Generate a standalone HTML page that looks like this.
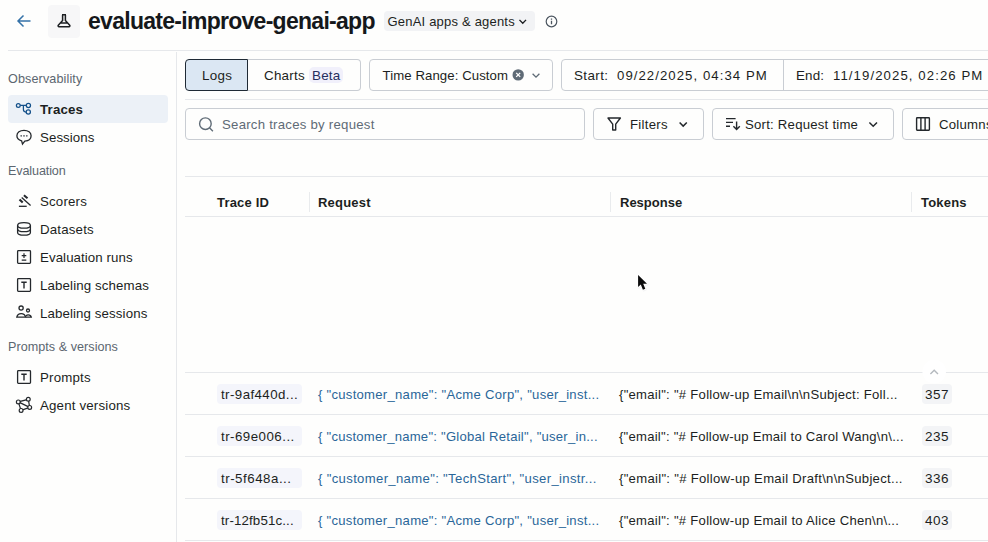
<!DOCTYPE html>
<html>
<head>
<meta charset="utf-8">
<style>
*{box-sizing:border-box;margin:0;padding:0}
html,body{width:988px;height:542px;overflow:hidden;background:#fefefd;}
body{font-family:"Liberation Sans",sans-serif;color:#1c1f22;position:relative;font-size:13px;}
.abs{position:absolute;white-space:nowrap;}
.hline{position:absolute;height:1px;background:#e6e8eb;}
.vline{position:absolute;width:1px;background:#e6e8eb;}
.btn{position:absolute;border:1px solid #c9cdd3;border-radius:4px;background:#fefefd;height:32px;}
.side{position:absolute;left:40px;font-size:13.3px;letter-spacing:0.17px;color:#1c1f22;white-space:nowrap;}
.sec{position:absolute;left:8px;font-size:12.6px;letter-spacing:0.04px;margin-top:1px;color:#5c6670;white-space:nowrap;}
.th{position:absolute;top:195px;font-weight:bold;font-size:13px;letter-spacing:0.2px;color:#1c1f22;white-space:nowrap;}
.tag{position:absolute;left:217px;width:85px;height:20px;border-radius:4px;background:#f4f5fb;font-size:13.3px;letter-spacing:0.52px;line-height:22px;padding-left:4px;margin-top:1px;white-space:nowrap;}
.req{position:absolute;left:318px;font-size:13.1px;letter-spacing:0.27px;color:#2a6699;white-space:nowrap;}
.resp{position:absolute;left:619px;font-size:13.1px;letter-spacing:0.27px;color:#1c1f22;white-space:nowrap;}
.tok{position:absolute;left:921.500px;width:30px;height:20px;border-radius:4px;background:#f3f4f6;font-size:13.5px;letter-spacing:0.5px;line-height:22px;text-align:center;margin-top:1px;padding-left:1px}
svg{position:absolute;overflow:visible}
</style>
</head>
<body>
<!-- header -->
<svg style="left:16px;top:13px" width="16" height="16" viewBox="0 0 16 16"><path d="M14.5 8H2.2M7.5 2.5L2 8l5.5 5.500" fill="none" stroke="#3572a8" stroke-width="1.5"/></svg>
<div class="abs" style="left:48px;top:5px;width:32px;height:33px;border-radius:4px;background:#f7f7f8"></div>
<svg style="left:56px;top:12.600px" width="16" height="16" viewBox="0 0 16 16"><path d="M6 1.800h4M6.600 2v5.500L2.300 12.200c-.5.600-.1 1.500.7 1.500h10c.8 0 1.200-.9.700-1.500L9.400 7.500V2M4.500 10h7" fill="none" stroke="#1c1f22" stroke-width="1.500"/></svg>
<div class="abs" style="left:88px;top:8px;font-size:23px;font-weight:bold;letter-spacing:-0.72px;color:#15181b">evaluate-improve-genai-app</div>
<div class="abs" style="left:384px;top:11px;width:151px;height:20px;border-radius:4px;background:#f2f3f5"></div>
<div class="abs" style="left:387.500px;top:14px;font-size:13px;letter-spacing:0.2px;color:#1c1f22">GenAI apps &amp; agents</div>
<svg style="left:518px;top:17.500px" width="9.500" height="7.500" viewBox="0 0 10 8"><path d="M1.500 2L5 5.500 8.500 2" fill="none" stroke="#1c1f22" stroke-width="1.500"/></svg>
<svg style="left:544.600px;top:14.700px" width="13" height="13" viewBox="0 0 13 13"><circle cx="6.500" cy="6.500" r="5.300" fill="none" stroke="#4c5660" stroke-width="1.200"/><path d="M6.500 5.800v3.500M6.500 3.500v1.200" stroke="#4c5660" stroke-width="1.300" fill="none"/></svg>
<div class="hline" style="left:8px;top:50px;width:980px"></div>
<div class="vline" style="left:176px;top:52px;height:490px"></div>

<!-- sidebar -->
<div class="sec" style="top:71px;letter-spacing:0.12px">Observability</div>
<div class="abs" style="left:8px;top:95px;width:160px;height:28px;border-radius:4px;background:#ecf1f7"></div>
<div class="side" style="top:102px;font-weight:bold;">Traces</div>
<div class="side" style="top:130px;letter-spacing:0.06px">Sessions</div>
<div class="sec" style="top:163px;letter-spacing:-0.12px">Evaluation</div>
<div class="side" style="top:194px">Scorers</div>
<div class="side" style="top:222px">Datasets</div>
<div class="side" style="top:250px;letter-spacing:0.07px">Evaluation runs</div>
<div class="side" style="top:278px;letter-spacing:0.12px">Labeling schemas</div>
<div class="side" style="top:306px;letter-spacing:0.1px">Labeling sessions</div>
<div class="sec" style="top:339px">Prompts &amp; versions</div>
<div class="side" style="top:370px">Prompts</div>
<div class="side" style="top:398px">Agent versions</div>

<!-- toolbar row 1 -->
<div class="btn" style="left:248px;top:59px;width:113px;border-radius:0 4px 4px 0;border-left:none"></div>
<div class="btn" style="left:185px;top:59px;width:63px;border-radius:4px 0 0 4px;background:#dbe7f3;border-color:#1f2a35"></div>
<div class="abs" style="left:202px;top:68px;font-size:13.400px;letter-spacing:0.3px">Logs</div>
<div class="abs" style="left:264px;top:68px;font-size:13.400px;letter-spacing:0.25px">Charts</div>
<div class="abs" style="left:309px;top:67px;width:34px;height:16px;border-radius:5px;background:#f1f0fb"></div>
<div class="abs" style="left:312px;top:68px;font-size:13.400px;letter-spacing:0.2px;color:#262e5e">Beta</div>
<div class="btn" style="left:369px;top:59px;width:184px"></div>
<div class="abs" style="left:382.500px;top:68px;font-size:13.200px;letter-spacing:0.08px">Time Range: Custom</div>
<div class="btn" style="left:561px;top:59px;width:440px"></div>
<div class="vline" style="left:783px;top:60px;height:30px;background:#c9cdd3"></div>
<div class="abs" style="left:574px;top:68px;font-size:13.400px;letter-spacing:0.4px">Start:</div>
<div class="abs" style="left:617px;top:68px;font-size:13.200px;letter-spacing:1.05px">09/22/2025, 04:34 PM</div>
<div class="abs" style="left:796px;top:68px;font-size:13.400px;letter-spacing:0.15px">End:</div>
<div class="abs" style="left:833px;top:68px;font-size:13.200px;letter-spacing:1.08px">11/19/2025, 02:26 PM</div>
<div class="hline" style="left:185px;top:99px;width:803px"></div>

<!-- toolbar row 2 -->
<div class="btn" style="left:185px;top:108px;width:400px"></div>
<div class="abs" style="left:222px;top:117px;font-size:13.200px;letter-spacing:0.25px;color:#5f6b76">Search traces by request</div>
<div class="btn" style="left:593px;top:108px;width:111px"></div>
<div class="abs" style="left:630px;top:117px;font-size:13.200px;letter-spacing:0.27px">Filters</div>
<div class="btn" style="left:712px;top:108px;width:182px"></div>
<div class="abs" style="left:745px;top:117px;font-size:13.200px;letter-spacing:0.22px">Sort: Request time</div>
<div class="btn" style="left:902px;top:108px;width:100px"></div>
<div class="abs" style="left:939px;top:117px;font-size:13.200px;letter-spacing:0.25px">Columns</div>

<!-- table -->
<div class="hline" style="left:185px;top:176px;width:803px"></div>
<div class="th" style="left:217px">Trace ID</div>
<div class="th" style="left:318px">Request</div>
<div class="th" style="left:620px;letter-spacing:0">Response</div>
<div class="th" style="left:921px">Tokens</div>
<div class="vline" style="left:309px;top:192px;height:20px;background:#e9ebed"></div>
<div class="vline" style="left:610px;top:192px;height:20px;background:#e9ebed"></div>
<div class="vline" style="left:911px;top:192px;height:20px;background:#e9ebed"></div>
<div class="hline" style="left:185px;top:216px;width:803px"></div>
<div class="hline" style="left:185px;top:372px;width:803px"></div>
<div class="hline" style="left:185px;top:414px;width:803px"></div>
<div class="hline" style="left:185px;top:456px;width:803px"></div>
<div class="hline" style="left:185px;top:498px;width:803px"></div>
<div class="hline" style="left:185px;top:540px;width:803px"></div>

<div class="tag" style="top:383px;letter-spacing:0.42px">tr-9af440d...</div>
<div class="tag" style="top:425px;letter-spacing:0.48px">tr-69e006...</div>
<div class="tag" style="top:467px">tr-5f648a...</div>
<div class="tag" style="top:509px;letter-spacing:0.14px">tr-12fb51c...</div>

<div class="req" style="top:387px">{ "customer_name": "Acme Corp", "user_inst...</div>
<div class="req" style="top:429px;letter-spacing:0.24px">{ "customer_name": "Global Retail", "user_in...</div>
<div class="req" style="top:471px;letter-spacing:0.35px">{ "customer_name": "TechStart", "user_instr...</div>
<div class="req" style="top:513px">{ "customer_name": "Acme Corp", "user_inst...</div>

<div class="resp" style="top:387px">{"email": "# Follow-up Email\n\nSubject: Foll...</div>
<div class="resp" style="top:429px;letter-spacing:0.24px">{"email": "# Follow-up Email to Carol Wang\n\...</div>
<div class="resp" style="top:471px;letter-spacing:0.30px">{"email": "# Follow-up Email Draft\n\nSubject...</div>
<div class="resp" style="top:513px">{"email": "# Follow-up Email to Alice Chen\n\...</div>

<div class="tok" style="top:383px">357</div>
<div class="tok" style="top:425px">235</div>
<div class="tok" style="top:467px">336</div>
<div class="tok" style="top:509px">403</div>

<!-- icon overlay in page coordinates -->
<svg style="left:0;top:0;pointer-events:none" width="988" height="542" viewBox="0 0 988 542" fill="none" stroke-linecap="butt" stroke-linejoin="miter">
<!-- traces -->
<g stroke="#14518a" stroke-width="1.250">
<circle cx="18.300" cy="105.400" r="1.900"/><circle cx="28.400" cy="105.400" r="2.100"/><circle cx="28.300" cy="112" r="2.100"/>
<path d="M20.200 105.400H26.300M23.400 105.400V109.600Q23.400 112 25.800 112H26.200"/>
</g>
<!-- sessions -->
<g stroke="#24282c" stroke-width="1.300">
<path d="M24 130.300c-4.100 0-7.100 2.300-7.100 5.400 0 2.400 1.900 4.300 4.700 5.100l.9 3.300 2.300-3c3.800-.2 6.300-2.400 6.300-5.400 0-3.100-3-5.400-7.100-5.400z"/>
</g>
<g fill="#5a6067" stroke="none"><circle cx="21.200" cy="135.800" r=".9"/><circle cx="24" cy="135.800" r=".9"/><circle cx="26.800" cy="135.800" r=".9"/></g>
<!-- scorers gavel -->
<g stroke="#24282c">
<path d="M18.900 206.300H26.700" stroke-width="1.300"/>
<path d="M21.700 197.400L30.600 205.600" stroke-width="1.300"/>
<path d="M23.900 195.300L27.500 198.300" stroke-width="2.100"/>
<path d="M19.500 199.500L22.700 202.500" stroke-width="2.100"/>
</g>
<!-- datasets -->
<g stroke="#24282c" stroke-width="1.300">
<ellipse cx="24" cy="225.400" rx="6.400" ry="2.700"/>
<path d="M17.600 225.400V232.400C17.600 233.900 20.400 235.100 24 235.100S30.400 233.900 30.400 232.400V225.400"/>
<path d="M17.600 228.900C17.600 230.400 20.400 231.600 24 231.600S30.400 230.400 30.400 228.900"/>
</g>
<!-- eval runs -->
<g stroke="#24282c" stroke-width="1.300">
<rect x="17.600" y="250.600" width="12.900" height="12.700" rx=".8"/>
<path d="M24 253.200V258M21.700 255.600H26.300M21.700 260.200H26.300" stroke-width="1.200"/>
</g>
<!-- labeling schemas -->
<g stroke="#24282c" stroke-width="1.300">
<rect x="17.600" y="278.600" width="12.900" height="12.700" rx=".8"/>
<path d="M21.300 282.200H26.700M24 282.200V288.400" stroke-width="1.400"/>
</g>
<!-- labeling sessions -->
<g stroke="#24282c" stroke-width="1.300">
<circle cx="21.100" cy="308.100" r="2.100"/>
<circle cx="28" cy="310.500" r="1.500"/>
<path d="M16.800 317.200C17.300 314.900 19 313.700 21.200 313.700S25.100 314.900 25.600 317.200Z"/>
<path d="M25.600 317.200H31.300C30.900 315.700 29.800 314.900 28.300 314.900 27.300 314.900 26.500 315.300 25.900 315.900"/>
</g>
<!-- prompts -->
<g stroke="#24282c" stroke-width="1.300">
<rect x="17.600" y="370.600" width="12.900" height="12.700" rx=".8"/>
<path d="M21.300 374.200H26.700M24 374.200V380.400" stroke-width="1.400"/>
</g>
<!-- agent versions -->
<g stroke="#24282c" stroke-width="1.200">
<path d="M18.300 401.900L28.300 399.300 29.700 407.400 21.100 410.400ZM18.300 401.900L29.700 407.400"/>
<g fill="#fefefd"><circle cx="18.300" cy="401.900" r="1.900"/><circle cx="28.300" cy="399.300" r="1.900"/><circle cx="29.700" cy="407.400" r="1.900"/><circle cx="21.100" cy="410.400" r="1.900"/></g>
</g>
<!-- x circle -->
<circle cx="518.200" cy="74.900" r="5.700" fill="#5f6b76"/>
<path d="M516.200 72.900L520.200 76.900M520.200 72.900L516.200 76.900" stroke="#fff" stroke-width="1.300"/>
<!-- chevrons -->
<path d="M532.600 73.800L536 77.200 539.400 73.800" stroke="#5f6b76" stroke-width="1.300"/>
<path d="M679.600 122.500L683.200 126.100 686.800 122.500" stroke="#24282c" stroke-width="1.500"/>
<path d="M869.400 122.500L873.200 126.200 877 122.500" stroke="#24282c" stroke-width="1.500"/>
<!-- search -->
<g stroke="#5f6b76" stroke-width="1.400"><circle cx="205.400" cy="123.700" r="5.800"/><path d="M209.500 127.800L212.900 131.200"/></g>
<!-- filter funnel -->
<path d="M608 118H620.400L615.700 124.200V130H612.700V124.200Z" stroke="#24282c" stroke-width="1.400" stroke-linejoin="round"/>
<!-- sort -->
<g stroke="#24282c" stroke-width="1.400">
<path d="M726 118.600H735.600M726 122.400H733M726 126.200H730"/>
<path d="M736.600 121.500V129.300M733.400 126.200L736.600 129.400 739.800 126.200"/>
</g>
<!-- columns -->
<g stroke="#24282c" stroke-width="1.400">
<rect x="916.600" y="117.800" width="12.800" height="12.400" rx=".6"/>
<path d="M920.900 117.800V130.200M925.100 117.800V130.200"/>
</g>
<!-- scroll-up bubble -->
<circle cx="934.200" cy="371.600" r="11.800" fill="#ffffff"/>
<path d="M930.400 374L934.200 370.200 938 374" stroke="#b4b9be" stroke-width="1.400"/>
<!-- cursor -->
<path d="M638.100 274.600V286.400L640.800 284 642.900 289.200 645.300 288.200 643.200 283.300H647Z" fill="#e9e9e9" stroke="#f4f4f4" stroke-width="2" stroke-linejoin="round" transform="translate(.5 1.300)"/>
<path d="M638.100 274.600V286.400L640.800 284 642.900 289.200 645.300 288.200 643.200 283.300H647Z" fill="#0b0b0b" stroke="#ffffff" stroke-width="1.600" stroke-linejoin="round" paint-order="stroke" transform="translate(0 .5)"/>
</svg>
</body>
</html>
